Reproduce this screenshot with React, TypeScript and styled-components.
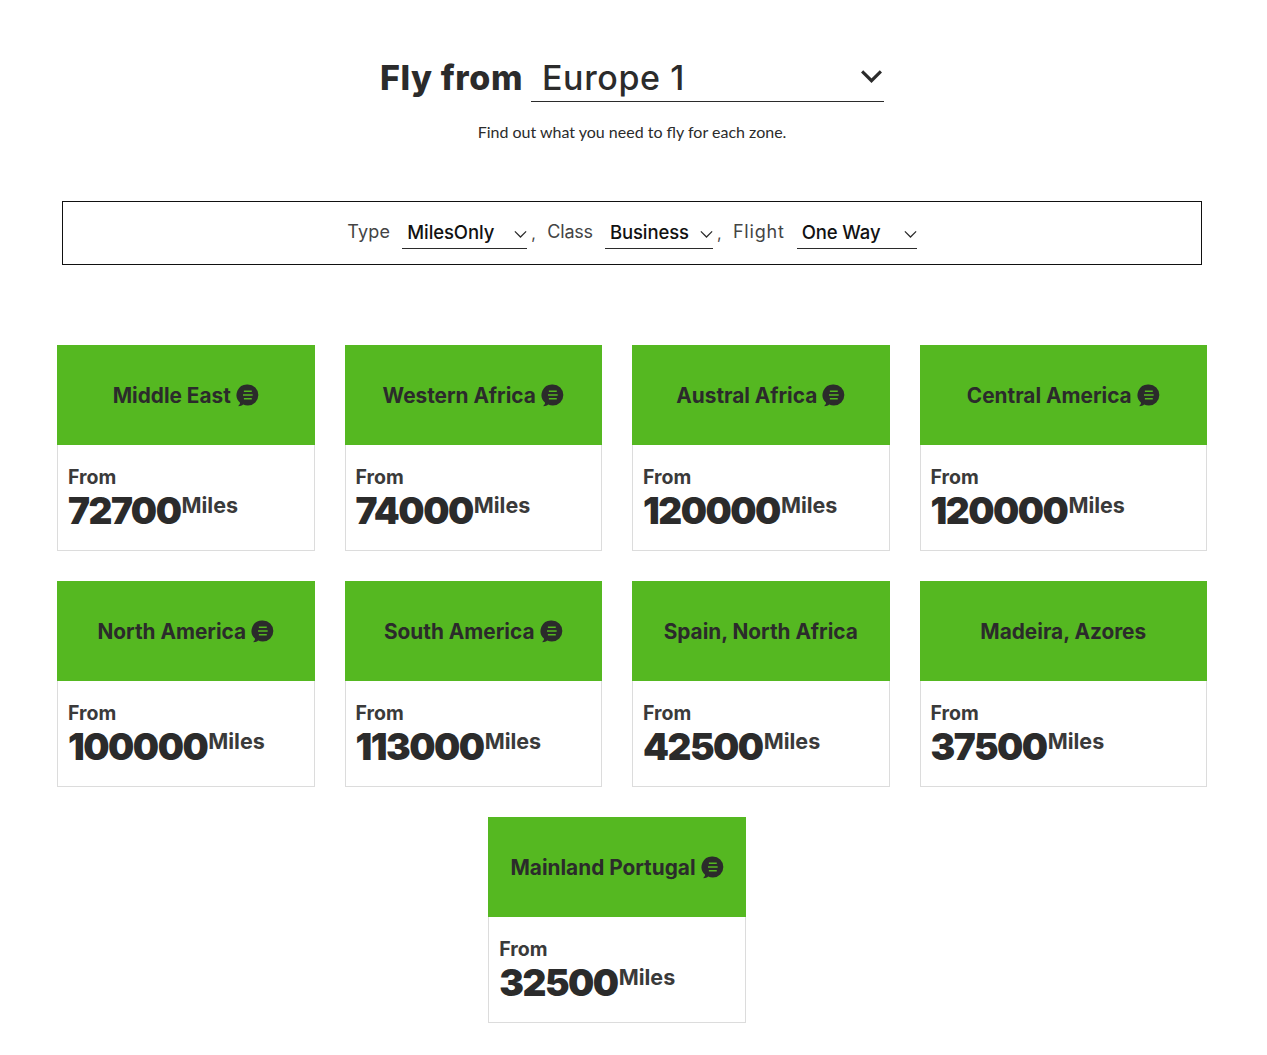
import React from "react";
import styled, { createGlobalStyle } from "styled-components";

const GlobalStyle = createGlobalStyle`
  html, body {
    margin: 0;
    padding: 0;
    background: #fff;
    color: #2b2b2b;
    font-family: "Inter", "Liberation Sans", sans-serif;
  }
`;

const zones = [
  { name: "Middle East", miles: 72700, chat: true },
  { name: "Western Africa", miles: 74000, chat: true },
  { name: "Austral Africa", miles: 120000, chat: true },
  { name: "Central America", miles: 120000, chat: true },
  { name: "North America", miles: 100000, chat: true },
  { name: "South America", miles: 113000, chat: true },
  { name: "Spain, North Africa", miles: 42500, chat: false },
  { name: "Madeira, Azores", miles: 37500, chat: false },
  { name: "Mainland Portugal", miles: 32500, chat: true },
];

const Chevron = ({ size, weight }: { size: number; weight: number }) => (
  <svg width={size} height={size} viewBox="0 0 24 24" fill="none" stroke="#2b2b2b" strokeWidth={weight}>
    <path d="M3 7l9 9 9-9" />
  </svg>
);

const ChatIcon = () => (
  <svg width="23" height="23" viewBox="0 0 21 21">
    <path
      fill="#2b2b2b"
      d="M10.8.4a9.6 9.6 0 0 1 0 19.2c-1.5 0-2.9-.3-4.2-.9-1.2 1-2.9 1.6-4.6 1.5 1-.9 1.6-2 1.7-3.1A9.6 9.6 0 0 1 10.800.4z"
    />
    <path stroke="#55b821" strokeWidth="1.300" d="M7.200 6.600h7.200M6.400 10h8.800M7.200 13.400h7.200" />
  </svg>
);

const App: React.FC = () => (
  <Page>
    <GlobalStyle />
    <Heading>
      <HeadingLabel>Fly from</HeadingLabel>
      <ZoneSelect>
        <span>Europe 1</span>
        <Chevron size={25} weight={3} />
      </ZoneSelect>
    </Heading>
    <Subtitle>Find out what you need to fly for each zone.</Subtitle>

    <FilterBox>
      <FilterLabel $tracking={0.2}>Type</FilterLabel>
      <FilterSelect $width={125}>
        MilesOnly
        <Chevron size={15} weight={2} />
      </FilterSelect>
      <Comma>,</Comma>
      <FilterLabel $tracking={-0.2}>Class</FilterLabel>
      <FilterSelect $width={108}>
        Business
        <Chevron size={15} weight={2} />
      </FilterSelect>
      <Comma>,</Comma>
      <FilterLabel $tracking={0.8}>Flight</FilterLabel>
      <FilterSelect $width={120}>
        One Way
        <Chevron size={15} weight={2} />
      </FilterSelect>
    </FilterBox>

    <CardGrid>
      {zones.map((zone) => (
        <CardSlot key={zone.name}>
          <CardHeader>
            <span>{zone.name}</span>
            {zone.chat && <ChatIcon />}
          </CardHeader>
          <CardBody>
            <FromLabel>From</FromLabel>
            <Price>
              <Amount>{zone.miles}</Amount>
              <Unit>Miles</Unit>
            </Price>
          </CardBody>
        </CardSlot>
      ))}
    </CardGrid>
  </Page>
);

const Page = styled.div`
  width: 1267px;
  height: 1055px;
  overflow: hidden;
  padding-top: 55px;
  box-sizing: border-box;
`;

const Heading = styled.div`
  display: flex;
  justify-content: center;
  align-items: flex-start;
  gap: 8px;
  margin-left: -3px;
`;

const HeadingLabel = styled.h1`
  margin: 0;
  font-size: 34px;
  line-height: 46px;
  font-weight: 800;
  letter-spacing: 0.6px;
  color: #2b2b2b;
`;

const ZoneSelect = styled.div`
  width: 353px;
  height: 47px;
  box-sizing: border-box;
  border-bottom: 1px solid #2b2b2b;
  padding: 0 0 0 11px;
  display: flex;
  align-items: center;
  justify-content: space-between;
  font-size: 34px;
  font-weight: 500;
  letter-spacing: 0.6px;
  line-height: 46px;

  svg {
    margin-top: -4px;
  }
`;

const Subtitle = styled.p`
  margin: 20px 0 0 -3px;
  text-align: center;
  font-family: "Lato", sans-serif;
  font-size: 16px;
  line-height: 20px;
  color: #2b2b2b;
`;

const FilterBox = styled.div`
  width: 1140px;
  height: 64px;
  box-sizing: border-box;
  margin: 59px 0 0 62px;
  border: 1px solid #111;
  display: flex;
  justify-content: center;
  align-items: center;
`;

const FilterLabel = styled.span<{ $tracking: number }>`
  font-size: 18px;
  letter-spacing: ${(props) => props.$tracking}px;
  color: #444;
  margin: -2px 12px 0 11px;
  line-height: 30px;

  &:first-child {
    margin-left: 0;
  }
`;

const FilterSelect = styled.div<{ $width: number }>`
  width: ${(props) => props.$width}px;
  height: 31px;
  margin-bottom: -1px;
  box-sizing: border-box;
  border-bottom: 1px solid #2b2b2b;
  padding: 0 0 2px 5px;
  display: flex;
  align-items: center;
  justify-content: space-between;
  font-size: 18.500px;
  font-weight: 500;
  letter-spacing: -0.1px;
  color: #111;

  svg {
    margin-top: 4px;
    margin-right: -1px;
  }
`;

const Comma = styled.span`
  font-size: 16px;
  color: #444;
  width: 9px;
  margin-left: 4px;
  margin-right: -4px;
`;

const CardGrid = styled.div`
  width: 1150px;
  margin: 80px 0 0 57px;
  display: flex;
  flex-wrap: wrap;
  justify-content: center;
  row-gap: 30px;
`;

const CardSlot = styled.div`
  width: 25%;
  box-sizing: border-box;
  padding-right: 30px;

  &:nth-child(4n) {
    padding-right: 0;
  }
`;

const CardHeader = styled.div`
  height: 100px;
  background: #55b821;
  display: flex;
  justify-content: center;
  align-items: center;
  gap: 5px;
  font-size: 20.800px;
  font-weight: 700;
  color: #2b2b2b;
  white-space: nowrap;
`;

const CardBody = styled.div`
  height: 106px;
  box-sizing: border-box;
  border: 1px solid #dcdcdc;
  border-top: none;
  padding: 21px 10px 0;
`;

const FromLabel = styled.div`
  font-size: 19.500px;
  font-weight: 700;
  line-height: 22px;
  color: #3a3a3a;
`;

const Price = styled.div`
  display: flex;
  align-items: flex-start;
  margin-top: 2px;
`;

const Amount = styled.span`
  font-size: 37px;
  font-weight: 900;
  line-height: 42px;
  letter-spacing: -1.5px;
  color: #2b2b2b;
`;

const Unit = styled.span`
  font-size: 21.500px;
  font-weight: 700;
  line-height: 22px;
  margin-top: 4px;
  margin-left: 1px;
  color: #3a3a3a;
`;

export default App;
